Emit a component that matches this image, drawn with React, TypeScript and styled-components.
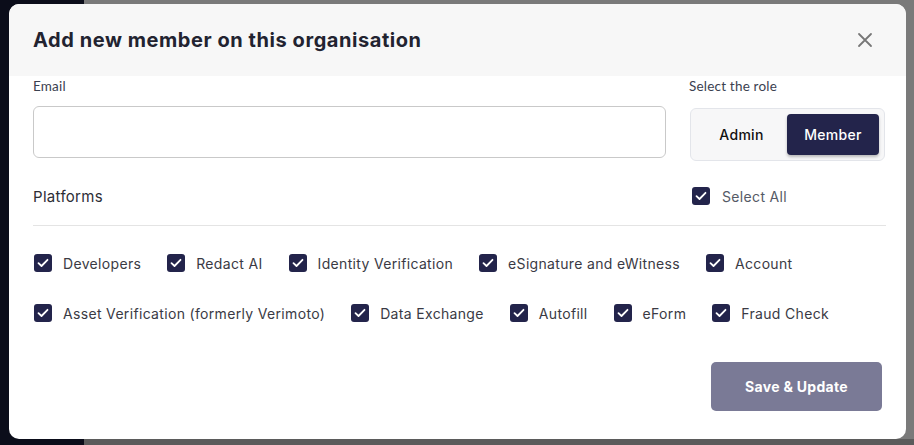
import React, { useState } from "react";
import styled, { createGlobalStyle } from "styled-components";

const Global = createGlobalStyle`
  html, body { margin: 0; padding: 0; width: 914px; height: 445px; overflow: hidden; }
  body { font-family: "Open Sans", sans-serif; }
  * { box-sizing: border-box; }
`;

const Page = styled.div`
  position: relative;
  width: 914px;
  height: 445px;
  display: flex;
  overflow: hidden;
`;

const Sidebar = styled.div`
  width: 84px;
  background: #0b0d1a;
`;

const Main = styled.div`
  flex: 1;
  background: #7a7a7a;
  display: flex;
  flex-direction: column;
  justify-content: flex-end;
`;

const BgStrip = styled.div`
  height: 6px;
  background: #5b5b5b;
`;

const Modal = styled.div`
  position: absolute;
  left: 9px;
  top: 4px;
  width: 897px;
  height: 435px;
  background: #ffffff;
  border-radius: 10px;
  overflow: hidden;
  display: flex;
  flex-direction: column;
`;

const Header = styled.div`
  height: 72px;
  background: #f7f7f7;
  display: flex;
  align-items: center;
  justify-content: space-between;
  padding: 0 32px 0 24px;
`;

const Title = styled.h2`
  margin: 0;
  font-family: "Inter", sans-serif;
  font-weight: 700;
  font-size: 20px;
  letter-spacing: 0.56px;
  color: #222330;
`;

const CloseBtn = styled.button`
  border: none;
  background: none;
  padding: 0;
  width: 18px;
  height: 18px;
  display: flex;
  align-items: center;
  justify-content: center;
  color: #777;
`;

const Body = styled.div`
  flex: 1;
  padding: 0 20px 0 24px;
  display: flex;
  flex-direction: column;
`;

const TopRow = styled.div`
  display: flex;
  gap: 23px;
  align-items: flex-start;
`;

const Field = styled.div<{ $w: string }>`
  width: ${(p) => p.$w};
  display: flex;
  flex-direction: column;
`;

const Label = styled.label`
  font-family: "Lato", sans-serif;
  font-size: 13.5px;
  letter-spacing: 0.2px;
  color: #3b4150;
  height: 20px;
  line-height: 20px;
`;

const Input = styled.input`
  margin-top: 10px;
  height: 52px;
  width: 633px;
  border: 1px solid #c9c9c9;
  border-radius: 6px;
  outline: none;
  font-size: 14px;
  padding: 0 12px;
`;

const RoleToggle = styled.div`
  margin-top: 12px;
  margin-left: 1px;
  height: 53px;
  width: 195px;
  background: #f7f7f8;
  border: 1px solid #e3e5ea;
  border-radius: 6px;
  padding: 5px;
  display: flex;
`;

const RoleBtn = styled.button<{ $active?: boolean }>`
  flex: ${(p) => (p.$active ? "0 0 92px" : "1")};
  border: none;
  border-radius: 4px;
  font-family: "Inter", sans-serif;
  font-size: 14px;
  font-weight: 500;
  letter-spacing: 0.3px;
  color: ${(p) => (p.$active ? "#fff" : "#111")};
  background: ${(p) => (p.$active ? "#23244b" : "transparent")};
  box-shadow: ${(p) => (p.$active ? "0 2px 3px rgba(0,0,0,0.25)" : "none")};
  padding: 0;
`;

const PlatformsRow = styled.div`
  margin-top: 20px;
  height: 45px;
  display: flex;
  justify-content: space-between;
  align-items: flex-start;
  border-bottom: 1px solid #e4e4e4;
  padding-right: 99px;
`;

const SectionTitle = styled.div`
  font-family: "Inter", sans-serif;
  font-size: 15px;
  letter-spacing: 0.3px;
  color: #2d2d35;
  line-height: 24px;
  margin-top: 4px;
`;

const CheckItem = styled.label`
  display: flex;
  align-items: center;
  gap: 11px;
  font-family: "Inter", sans-serif;
  font-size: 14px;
  letter-spacing: 0.33px;
  color: #3a3a44;
  white-space: nowrap;
  height: 20px;
`;

const SelectAllItem = styled(CheckItem)`
  margin-top: 5px;
  gap: 12px;
  color: #555a66;
`;

const Box = styled.span`
  width: 18px;
  height: 18px;
  border-radius: 3px;
  background: #23244b;
  display: flex;
  align-items: center;
  justify-content: center;
  flex-shrink: 0;
`;

const Grid = styled.div`
  display: flex;
  flex-direction: column;
  gap: 30px;
  padding: 27px 0 0 1px;
`;

const GridRow = styled.div`
  display: flex;
  column-gap: 26px;
`;

const Footer = styled.div`
  display: flex;
  justify-content: flex-end;
  margin-top: 39px;
  padding-right: 4px;
`;

const SaveBtn = styled.button`
  width: 171px;
  height: 49px;
  border: none;
  border-radius: 5px;
  background: #7a7a96;
  color: #fff;
  font-family: "Inter", sans-serif;
  font-weight: 700;
  font-size: 14px;
  letter-spacing: 0.3px;
`;

const Check = () => (
  <Box>
    <svg width="12" height="10" viewBox="0 0 12 10" fill="none">
      <path d="M1.5 5.2L4.5 8L10.5 1.8" stroke="#fff" strokeWidth="1.8" strokeLinecap="round" strokeLinejoin="round" />
    </svg>
  </Box>
);

const rows = [
  ["Developers", "Redact AI", "Identity Verification", "eSignature and eWitness", "Account"],
  ["Asset Verification (formerly Verimoto)", "Data Exchange", "Autofill", "eForm", "Fraud Check"],
];

export default function App() {
  const [email, setEmail] = useState("");
  return (
    <Page>
      <Global />
      <Sidebar />
      <Main>
        <BgStrip />
      </Main>
      <Modal>
        <Header>
          <Title>Add new member on this organisation</Title>
          <CloseBtn aria-label="Close">
            <svg width="16" height="16" viewBox="0 0 16 16">
              <path d="M2 2L14 14M14 2L2 14" stroke="#777" strokeWidth="1.8" strokeLinecap="round" />
            </svg>
          </CloseBtn>
        </Header>
        <Body>
          <TopRow>
            <Field $w="633px">
              <Label>Email</Label>
              <Input value={email} onChange={(e) => setEmail(e.target.value)} />
            </Field>
            <Field $w="196px">
              <Label>Select the role</Label>
              <RoleToggle>
                <RoleBtn>Admin</RoleBtn>
                <RoleBtn $active>Member</RoleBtn>
              </RoleToggle>
            </Field>
          </TopRow>
          <PlatformsRow>
            <SectionTitle>Platforms</SectionTitle>
            <SelectAllItem>
              <Check />
              Select All
            </SelectAllItem>
          </PlatformsRow>
          <Grid>
            {rows.map((r, i) => (
              <GridRow key={i}>
                {r.map((p) => (
                  <CheckItem key={p}>
                    <Check />
                    {p}
                  </CheckItem>
                ))}
              </GridRow>
            ))}
          </Grid>
          <Footer>
            <SaveBtn>Save &amp; Update</SaveBtn>
          </Footer>
        </Body>
      </Modal>
    </Page>
  );
}
